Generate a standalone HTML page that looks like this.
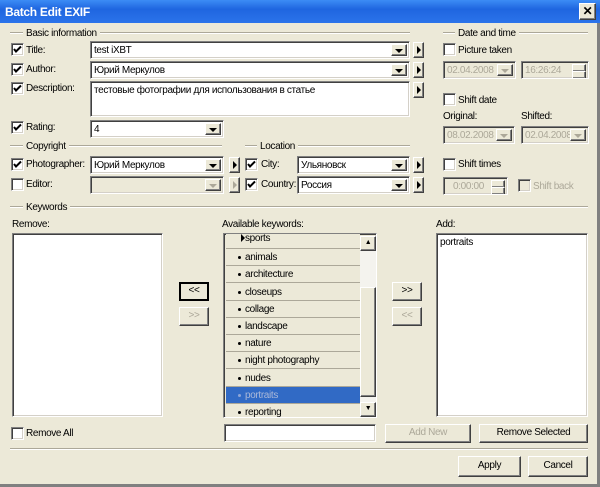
<!DOCTYPE html>
<html><head><meta charset="utf-8"><style>
*{box-sizing:border-box;margin:0;padding:0}
body{width:600px;height:487px;background:#ece9d8;position:relative;overflow:hidden;font:10px "Liberation Sans",sans-serif;letter-spacing:-0.35px;color:#000}
.a{position:absolute}
.t{position:absolute;white-space:nowrap;font-size:10px;line-height:13px}
.g{color:#aca899}
.f{position:absolute;background:#fff;border:1px solid;border-color:#808080 #fff #fff #808080;box-shadow:inset 1px 1px #404040,inset -1px -1px #d4d0c8;padding:3px 0 0 3px;font-size:10px;white-space:nowrap;overflow:hidden}
.dis{background:#ece9d8;color:#aca899}
.b{position:absolute;background:#ece9d8;border:1px solid;border-color:#fff #404040 #404040 #fff;box-shadow:inset -1px -1px #808080;text-align:center;font-size:10px}
.dd{position:absolute;right:2px;top:2px;bottom:2px;width:16px}
.dd:after{content:"";position:absolute;left:3px;top:4px;border-left:4px solid transparent;border-right:4px solid transparent;border-top:4px solid #000}
.dis .dd:after{border-top-color:#aca899}
.ar{position:absolute;width:11px;height:16px}
.ar:after{content:"";position:absolute;left:3px;top:3px;border-top:4px solid transparent;border-bottom:4px solid transparent;border-left:4px solid #000}
.ar.x:after{border-left-color:#aca899}
.cb{position:absolute;width:13px;height:13px;background:#fff;border:1px solid;border-color:#808080 #fff #fff #808080;box-shadow:inset 1px 1px #404040,inset -1px -1px #d4d0c8}
.cb.d{background:#ece9d8}
.cb svg{position:absolute;left:1px;top:1px}
.hl{position:absolute;height:2px;border-top:1px solid #aca899;border-bottom:1px solid #fff}
.lb{position:absolute;background:#ece9d8;padding:0 3px;font-size:10px;line-height:13px}
.it{position:absolute;left:2px;width:134px;height:17px;border-bottom:1px solid #aca899;background:#ece9d8;font-size:10px;padding:3px 0 0 19px}
.it:before{content:"";position:absolute;left:12px;top:7px;width:3px;height:3px;background:#000;border-radius:2px}
.it.sel:before{background:#8fa6d6}
.it.ns:before{display:none}
.sp{position:absolute;right:2px;width:14px;height:8px}
</style></head><body>
<div class="a" style="left:0;top:0;width:600px;height:23px;background:linear-gradient(#3c8cf5,#1f66e0 40%,#2b73ea)"></div>
<div class="t" style="left:5px;top:5px;color:#fff;font-weight:bold;font-size:12px;letter-spacing:-0.3px;line-height:14px">Batch Edit EXIF</div>
<div class="b" style="left:579px;top:3px;width:17px;height:17px;font-weight:bold;font-size:12px;line-height:14px">✕</div>
<div class="a" style="left:597px;top:23px;width:3px;height:464px;background:#808080"></div>
<div class="a" style="left:0;top:484px;width:600px;height:3px;background:#808080"></div>

<div class="hl" style="left:10px;top:32px;width:400px"></div>
<div class="lb" style="left:23px;top:27px">Basic information</div>

<div class="cb" style="left:11px;top:43px"><svg width="9" height="9"><path d="M1 4 L3 6.5 L8 1.5" stroke="#000" stroke-width="2" fill="none"/></svg></div>
<div class="t" style="left:26px;top:44px">Title:</div>
<div class="f" style="left:90px;top:41px;width:320px;height:18px">test iXBT<div class="b dd"></div></div>
<div class="b ar" style="left:413px;top:42px"></div>

<div class="cb" style="left:11px;top:63px"><svg width="9" height="9"><path d="M1 4 L3 6.5 L8 1.5" stroke="#000" stroke-width="2" fill="none"/></svg></div>
<div class="t" style="left:26px;top:63px">Author:</div>
<div class="f" style="left:90px;top:61px;width:320px;height:18px">Юрий Меркулов<div class="b dd"></div></div>
<div class="b ar" style="left:413px;top:62px"></div>

<div class="cb" style="left:11px;top:82px"><svg width="9" height="9"><path d="M1 4 L3 6.5 L8 1.5" stroke="#000" stroke-width="2" fill="none"/></svg></div>
<div class="t" style="left:26px;top:82px">Description:</div>
<div class="f" style="left:90px;top:81px;width:320px;height:36px">тестовые фотографии для использования в статье</div>
<div class="b ar" style="left:413px;top:82px"></div>

<div class="cb" style="left:11px;top:121px"><svg width="9" height="9"><path d="M1 4 L3 6.5 L8 1.5" stroke="#000" stroke-width="2" fill="none"/></svg></div>
<div class="t" style="left:26px;top:121px">Rating:</div>
<div class="f" style="left:90px;top:120px;width:134px;height:18px">4<div class="b dd"></div></div>

<div class="hl" style="left:10px;top:145px;width:212px"></div>
<div class="lb" style="left:23px;top:140px">Copyright</div>
<div class="cb" style="left:11px;top:158px"><svg width="9" height="9"><path d="M1 4 L3 6.5 L8 1.5" stroke="#000" stroke-width="2" fill="none"/></svg></div>
<div class="t" style="left:26px;top:158px">Photographer:</div>
<div class="f" style="left:90px;top:156px;width:134px;height:18px">Юрий Меркулов<div class="b dd"></div></div>
<div class="b ar" style="left:229px;top:157px"></div>
<div class="cb" style="left:11px;top:178px"></div>
<div class="t" style="left:26px;top:178px">Editor:</div>
<div class="f dis" style="left:90px;top:176px;width:134px;height:18px"><div class="b dd"></div></div>
<div class="b ar x" style="left:229px;top:177px"></div>

<div class="hl" style="left:245px;top:145px;width:165px"></div>
<div class="lb" style="left:257px;top:140px">Location</div>
<div class="cb" style="left:245px;top:158px"><svg width="9" height="9"><path d="M1 4 L3 6.5 L8 1.5" stroke="#000" stroke-width="2" fill="none"/></svg></div>
<div class="t" style="left:261px;top:158px">City:</div>
<div class="f" style="left:297px;top:156px;width:113px;height:18px">Ульяновск<div class="b dd"></div></div>
<div class="b ar" style="left:413px;top:157px"></div>
<div class="cb" style="left:245px;top:178px"><svg width="9" height="9"><path d="M1 4 L3 6.5 L8 1.5" stroke="#000" stroke-width="2" fill="none"/></svg></div>
<div class="t" style="left:261px;top:178px">Country:</div>
<div class="f" style="left:297px;top:176px;width:113px;height:18px">Россия<div class="b dd"></div></div>
<div class="b ar" style="left:413px;top:177px"></div>

<div class="hl" style="left:443px;top:32px;width:145px"></div>
<div class="lb" style="left:455px;top:27px">Date and time</div>
<div class="cb" style="left:443px;top:43px"></div>
<div class="t" style="left:458px;top:44px">Picture taken</div>
<div class="f dis" style="left:443px;top:61px;width:73px;height:18px">02.04.2008<div class="b dd"></div></div>
<div class="f dis" style="left:521px;top:61px;width:68px;height:18px">16:26:24<div class="b sp" style="top:2px"></div><div class="b sp" style="top:9px"></div></div>
<div class="cb" style="left:443px;top:93px"></div>
<div class="t" style="left:458px;top:94px">Shift date</div>
<div class="t" style="left:443px;top:110px">Original:</div>
<div class="t" style="left:521px;top:110px">Shifted:</div>
<div class="f dis" style="left:443px;top:126px;width:72px;height:18px">08.02.2008<div class="b dd"></div></div>
<div class="f dis" style="left:521px;top:126px;width:68px;height:18px">02.04.2008<div class="b dd"></div></div>
<div class="cb" style="left:443px;top:158px"></div>
<div class="t" style="left:458px;top:158px">Shift times</div>
<div class="f dis" style="left:443px;top:177px;width:65px;height:18px;padding-left:9px">0:00:00<div class="b sp" style="top:2px"></div><div class="b sp" style="top:9px"></div></div>
<div class="cb d" style="left:518px;top:179px"></div>
<div class="t g" style="left:533px;top:180px">Shift back</div>

<div class="hl" style="left:10px;top:206px;width:578px"></div>
<div class="lb" style="left:23px;top:201px">Keywords</div>
<div class="t" style="left:12px;top:218px">Remove:</div>
<div class="f" style="left:12px;top:233px;width:151px;height:184px"></div>
<div class="b" style="left:179px;top:282px;width:30px;height:19px;border:2px solid #000;box-shadow:none;line-height:14px">&lt;&lt;</div>
<div class="b" style="left:179px;top:307px;width:30px;height:19px;color:#aca899;line-height:16px">&gt;&gt;</div>

<div class="t" style="left:222px;top:218px">Available keywords:</div>
<div class="f" style="left:223px;top:233px;width:154px;height:185px;background:#ece9d8;padding:0">
<div class="it ns" style="top:-4px;height:19px;padding-top:3px">sports</div>
<div class="it" style="top:15px">animals</div>
<div class="it" style="top:32px">architecture</div>
<div class="it" style="top:50px">closeups</div>
<div class="it" style="top:67px">collage</div>
<div class="it" style="top:84px">landscape</div>
<div class="it" style="top:101px">nature</div>
<div class="it" style="top:118px">night photography</div>
<div class="it" style="top:136px">nudes</div>
<div class="it sel" style="top:153px;background:#316ac5;color:#aab8d8">portraits</div>
<div class="it" style="top:170px">reporting</div>
<div class="a" style="left:136px;top:2px;width:16px;height:181px;background:#f4f3ee"></div>
<div class="b" style="left:136px;top:2px;width:16px;height:15px;font-size:7px;line-height:12px">▲</div>
<div class="b" style="left:136px;top:53px;width:16px;height:110px"></div>
<div class="b" style="left:136px;top:168px;width:16px;height:15px;font-size:7px;line-height:12px">▼</div>
</div>
<div class="a" style="left:241px;top:234px;border-top:4px solid transparent;border-bottom:4px solid transparent;border-left:4px solid #000"></div>

<div class="b" style="left:392px;top:282px;width:30px;height:19px;line-height:16px">&gt;&gt;</div>
<div class="b" style="left:392px;top:307px;width:30px;height:19px;color:#aca899;line-height:16px">&lt;&lt;</div>

<div class="t" style="left:436px;top:218px">Add:</div>
<div class="f" style="left:436px;top:233px;width:152px;height:184px">portraits</div>

<div class="cb" style="left:11px;top:427px"></div>
<div class="t" style="left:26px;top:427px">Remove All</div>
<div class="f" style="left:224px;top:424px;width:152px;height:18px"></div>
<div class="b" style="left:385px;top:424px;width:86px;height:19px;color:#aca899;line-height:16px">Add New</div>
<div class="b" style="left:479px;top:424px;width:109px;height:19px;line-height:16px">Remove Selected</div>

<div class="hl" style="left:10px;top:448px;width:578px"></div>
<div class="b" style="left:458px;top:456px;width:63px;height:21px;line-height:18px">Apply</div>
<div class="b" style="left:528px;top:456px;width:60px;height:21px;line-height:18px">Cancel</div>
</body></html>
